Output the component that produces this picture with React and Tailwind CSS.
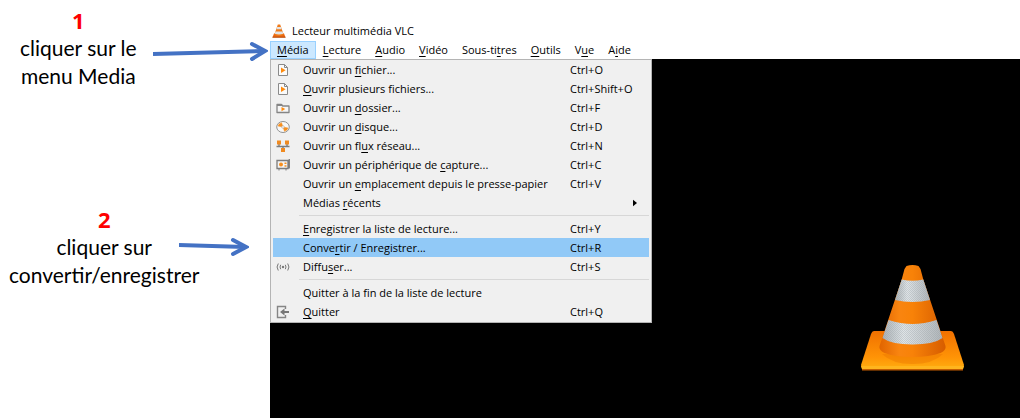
import React from 'react';

const menus = [
    { before: '', key: 'M', after: 'édia', active: true },
    { before: '', key: 'L', after: 'ecture' },
    { before: '', key: 'A', after: 'udio' },
    { before: '', key: 'V', after: 'idéo' },
    { before: 'Sous-ti', key: 't', after: 'res' },
    { before: '', key: 'O', after: 'utils' },
    { before: 'V', key: 'u', after: 'e' },
    { before: 'A', key: 'i', after: 'de' },
];

const groups = [
    [
        { icon: 'file', before: 'Ouvrir un ', key: 'f', after: 'ichier...', shortcut: 'Ctrl+O' },
        { icon: 'file', before: '', key: 'O', after: 'uvrir plusieurs fichiers...', shortcut: 'Ctrl+Shift+O' },
        { icon: 'folder', before: 'Ouvrir un ', key: 'd', after: 'ossier...', shortcut: 'Ctrl+F' },
        { icon: 'disc', before: 'Ouvrir un ', key: 'd', after: 'isque...', shortcut: 'Ctrl+D' },
        { icon: 'network', before: 'Ouvrir un fl', key: 'u', after: 'x réseau...', shortcut: 'Ctrl+N' },
        { icon: 'capture', before: 'Ouvrir un périphérique de ', key: 'c', after: 'apture...', shortcut: 'Ctrl+C' },
        { before: 'Ouvrir un ', key: 'e', after: 'mplacement depuis le presse-papier', shortcut: 'Ctrl+V' },
        { before: 'Médias ', key: 'r', after: 'écents', submenu: true },
    ],
    [
        { before: '', key: 'E', after: 'nregistrer la liste de lecture...', shortcut: 'Ctrl+Y' },
        { before: 'Conve', key: 'r', after: 'tir / Enregistrer...', shortcut: 'Ctrl+R', active: true },
        { icon: 'stream', before: 'Diffu', key: 's', after: 'er...', shortcut: 'Ctrl+S' },
    ],
    [
        { before: 'Quitter à la fin de la liste de lecture', key: '', after: '' },
        { icon: 'quit', before: '', key: 'Q', after: 'uitter', shortcut: 'Ctrl+Q' },
    ],
];

const icons = {
    file: (
        <>
            <path d="M2.5 1.5h6l3 3v8h-9z" fill="#fafafa" stroke="#8a8a8a" strokeLinejoin="round" />
            <path d="M8.5 1.5v3h3" fill="none" stroke="#8a8a8a" />
            <path d="M5 4.5v5.400l4.600-2.700z" fill="#ff8a0c" />
        </>
    ),
    folder: (
        <>
            <path d="M1 3.5h4.500l1 1.500H13v6.500H1z" fill="#f6f6f6" stroke="#858585" strokeWidth="1.300" strokeLinejoin="round" />
            <path d="M1 3h5l1 2H1z" fill="#858585" />
            <path d="M5.500 6v4.200l3.700-2.100z" fill="#ff8a0c" />
        </>
    ),
    disc: (
        <>
            <ellipse cx="7" cy="7" rx="6.300" ry="5.500" fill="#f8f8f8" stroke="#929292" />
            <path d="M7 7L2 6A5 4.500 0 0 1 5.500 2.700zM7 7l5 1A5 4.500 0 0 1 8.500 11.300z" fill="#f78f1e" stroke="#f78f1e" strokeWidth="0.500" />
            <circle cx="7" cy="7" r="1.300" fill="#fff" stroke="#b0a090" strokeWidth="0.600" />
        </>
    ),
    network: (
        <>
            <path d="M3 5v2.500h8V5M7 7.500V10M0.500 7.500h13" fill="none" stroke="#7c7c7c" strokeWidth="1.400" />
            <path d="M1 1.500h4v4H1zM9 1.500h4v4H9zM5 9h4v4H5z" fill="#f08a20" />
        </>
    ),
    capture: (
        <>
            <path d="M1 2.500h11v8H1zM13.300 1v9.500" fill="#f4f4f4" stroke="#7c7c7c" strokeWidth="1.300" />
            <path d="M3 10.500v2M10 10.500v2" stroke="#7c7c7c" />
            <circle cx="5" cy="6.500" r="2" fill="#f78f1e" />
            <path d="M8.500 4.500h2v1.500h-2zM8.500 7.200h2v1.500h-2z" fill="#f78f1e" />
        </>
    ),
    stream: (
        <>
            <circle cx="7" cy="7" r="1.200" fill="#777" />
            <path d="M4.700 4.800Q3.300 7 4.700 9.200M9.300 4.800q1.400 2.200 0 4.400M2.300 3.500Q-0.200 7 2.300 10.500M11.700 3.500q2.500 3.500 0 7" fill="none" stroke="#777" />
        </>
    ),
    quit: (
        <>
            <path d="M9.500 4V1.500h-8v11h8V10" fill="none" stroke="#858585" strokeWidth="1.400" />
            <path d="M13 6H8.500V3.500L4 7l4.500 3.500V8H13z" fill="#777" />
        </>
    ),
};

const Cone = ({ className }) => (
    <svg viewBox="0 0 105 108" className={className} aria-hidden="true">
        <defs>
            <linearGradient id="body" x1="0" x2="1">
                <stop offset="0" stopColor="#e06400" />
                <stop offset="0.3" stopColor="#f98510" />
                <stop offset="0.5" stopColor="#f88208" />
                <stop offset="1" stopColor="#d65c00" />
            </linearGradient>
            <linearGradient id="band" x1="0" x2="1">
                <stop offset="0" stopColor="#aab0b4" />
                <stop offset="0.35" stopColor="#dfe4e7" />
                <stop offset="1" stopColor="#b0b5b9" />
            </linearGradient>
            <linearGradient id="base" x1="0" y1="0" x2="0" y2="1">
                <stop offset="0" stopColor="#f07000" />
                <stop offset="0.7" stopColor="#ff9406" />
                <stop offset="1" stopColor="#ffae10" />
            </linearGradient>
            <pattern id="mesh" width="2" height="2" patternUnits="userSpaceOnUse">
                <path d="M0 0h1v1H0zM1 1h1v1H1z" fill="#8f989e" opacity="0.3" />
            </pattern>
        </defs>
        <path d="M14 67h77q2 0 3 3l10 31-1 4H2l-1-4 10-31q1-3 3-3z" fill="url(#base)" />
        <path d="M1 102h103l-1 3H2z" fill="#ffb51e" />
        <path d="M2 105h101v1.500H2z" fill="#c45c00" />
        <path d="M22 90q10 10 30.500 10T83 90z" fill="#e87400" opacity="0.400" />
        <path d="M46.500 2q6-2 12 0l2 3L63.300 15.500 85.500 82q1 4-5 7-11 4-28 4t-28-4q-6-3-5-7L41.700 15.500 44.500 5z" fill="url(#body)" />
        <path d="M41.700 15.500q10.800 2.500 21.600 0L70 36q-17.500 4-35 0z" fill="url(#band)" />
        <path d="M41.700 15.500q10.800 2.500 21.600 0L70 36q-17.500 4-35 0z" fill="url(#mesh)" />
        <path d="M28.500 56q24 8 48 0l6 18q-9 6.500-30 6.500t-30-6.500z" fill="url(#band)" />
        <path d="M28.500 56q24 8 48 0l6 18q-9 6.500-30 6.500t-30-6.500z" fill="url(#mesh)" />
    </svg>
);

const SmallCone = () => (
    <svg viewBox="0 0 14 14" className="size-3.5" aria-hidden="true">
        <path d="M2 9.500h10l1.500 4H0.500z" fill="#e8620c" />
        <path d="M5.800 0.500h2.400L11.800 11q-4.800 2-9.600 0z" fill="#f07a18" />
        <path d="M5.200 3h3.600l0.800 2.300H4.400zM3.500 7.500h7l0.700 2.200q-4.200 1.500-8.400 0z" fill="#dfe3e6" />
        <path d="M0.500 13.200h13" stroke="#b8551a" />
    </svg>
);

const Mnemonic = ({ item }) => (
    <span className="whitespace-pre">
        {item.before}
        <span className="underline underline-offset-2">{item.key}</span>
        {item.after}
    </span>
);

const MenuItem = ({ item }) => (
    <li>
        <button
            type="button"
            className={`flex h-[19px] w-full items-center text-left ${item.active ? 'bg-[#91c9f7]' : ''}`}
        >
            <span className="flex w-[30px] shrink-0 pl-[3px]">
                {item.icon && (
                    <svg viewBox="0 0 14 14" className="size-3.5" aria-hidden="true">{icons[item.icon]}</svg>
                )}
            </span>
            <span className="flex-1"><Mnemonic item={item} /></span>
            <span className="w-[79px] shrink-0">{item.shortcut}</span>
            {item.submenu && (
                <svg viewBox="0 0 5 8" className="-ml-4 mr-3 h-2 w-1" aria-hidden="true">
                    <path d="M0 0l5 4-5 4z" fill="#000" />
                </svg>
            )}
        </button>
    </li>
);

const Step = ({ number, lines, children, className }) => (
    <div className={`flex ${className}`}>
        <div className="text-center text-[21px] leading-7">
            <p className="font-['Open_Sans',sans-serif] text-[22px] leading-7 font-bold text-[#fe0000]">{number}</p>
            {lines.map(line => <p key={line} className="whitespace-nowrap">{line}</p>)}
        </div>
        {children}
    </div>
);

const App = () => {
    return (
        <div className="flex h-screen bg-white pb-0.5 text-black">
            <aside className="flex w-[270px] shrink-0 flex-col gap-[115px] pt-1.5 font-['Lato',sans-serif]">
                <Step number="1" lines={['cliquer sur le', 'menu Media']} className="pl-5">
                    <svg viewBox="0 0 115 20" className="mt-[35px] mr-0.5 ml-auto h-5 w-[115px]" fill="none" stroke="#4472c4" strokeWidth="4" aria-hidden="true">
                        <path d="M0 13L111 10" />
                        <path d="M99 3l13 7-13 8" strokeLinecap="round" />
                    </svg>
                </Step>
                <Step number="2" lines={['cliquer sur', 'convertir/enregistrer']} className="pl-[9px]">
                    <svg viewBox="0 0 70 20" className="mt-8 -ml-5 h-5 w-[70px]" fill="none" stroke="#4472c4" strokeWidth="4" aria-hidden="true">
                        <path d="M0 8l66 2" />
                        <path d="M54 3l13 7-13 7" strokeLinecap="round" />
                    </svg>
                </Step>
            </aside>

            <main className="flex min-w-0 flex-1 flex-col font-['Open_Sans',sans-serif] text-[11px] leading-[17px]">
                <header className="flex items-center gap-1.5 pt-[22px] pl-0.5">
                    <SmallCone />
                    <h1>Lecteur multimédia VLC</h1>
                </header>

                <nav className="flex pt-0.5">
                    {menus.map(menu => (
                        <button
                            key={menu.before + menu.key}
                            type="button"
                            className={`h-[18px] border px-[6px] leading-4 ${menu.active ? 'border-[#99d1ff] bg-[#cce8ff]' : 'border-transparent'}`}
                        >
                            <Mnemonic item={menu} />
                        </button>
                    ))}
                </nav>

                <section className="flex flex-1 items-start justify-between bg-black">
                    <div className="w-[382px] border border-[#b4b4b4] bg-[#f0f0f0] px-0.5 pb-px">
                        {groups.map((group, i) => (
                            <ul key={i} className="group">
                                {group.map(item => <MenuItem key={item.before + item.key + item.after} item={item} />)}
                                <li className="ml-[26px] py-[3px] group-last:hidden"><hr className="border-[#d7d7d7]" /></li>
                            </ul>
                        ))}
                    </div>
                    <Cone className="mr-[55px] mb-[46px] w-[105px] self-end" />
                </section>
            </main>
        </div>
    );
};

export default App;
